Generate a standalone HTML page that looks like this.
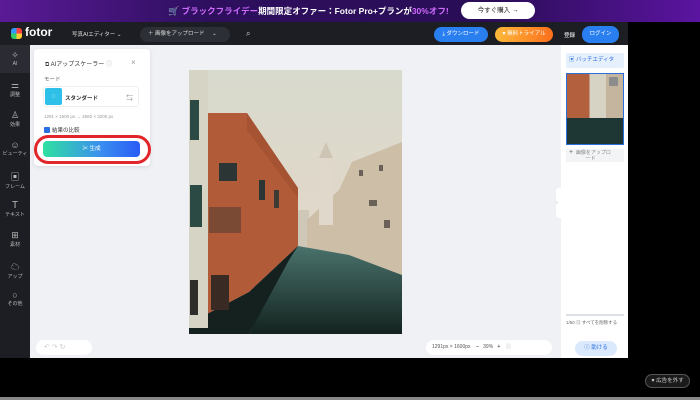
<!DOCTYPE html>
<html><head><meta charset="utf-8"><style>
*{margin:0;padding:0;box-sizing:border-box}
body{width:700px;height:400px;background:#000;position:relative;overflow:hidden;font-family:"Liberation Sans","Noto Sans CJK JP",sans-serif;font-size:6px;color:#333}
.a{position:absolute}
.banner{left:0;top:0;width:700px;height:22px;background:linear-gradient(90deg,#5a1a96,#2d0f5e 30%,#2a0d56 70%,#5b14a0)}
.hdr{left:0;top:22px;width:628px;height:23px;background:#1d1e23}
.side{left:0;top:45px;width:30px;height:313px;background:#1d1e23}
.canvas{left:30px;top:45px;width:531px;height:313px;background:#eff1f4}
.rp{left:561px;top:45px;width:67px;height:313px;background:#fff}
.si{width:30px;text-align:center;color:#bbb;font-size:5px}
.btn{border-radius:8px;color:#fff;font-size:5.5px;text-align:center;line-height:15px;height:15px}
</style></head><body>
<div class="a banner"></div>
<div class="a" style="left:168px;top:5px;font-size:8.5px;color:#fff;white-space:nowrap;font-weight:bold"><span style="font-size:9px">🛒</span> <span style="color:#d06bff">ブラックフライデー</span>期間限定オファー：Fotor Pro+プランが<span style="color:#d06bff">30%オフ!</span></div>
<div class="a" style="left:461px;top:2px;width:74px;height:17px;border-radius:9px;background:#fff;color:#222;font-size:6.5px;text-align:center;line-height:17px">今すぐ購入 →</div>
<div class="a hdr"></div>
<div class="a" style="left:11px;top:28px;width:11px;height:11px;border-radius:3px;background:conic-gradient(#f44 0 25%,#fc3 0 50%,#3c6 0 75%,#39f 0)"></div>
<div class="a" style="left:25px;top:25px;color:#fff;font-size:12px;font-weight:bold">fotor</div>
<div class="a" style="left:72px;top:30px;color:#ddd;font-size:5.5px">写真AIエディター ⌄</div>
<div class="a" style="left:140px;top:27px;width:90px;height:15px;border-radius:8px;background:#2d2f36;color:#ddd;font-size:5.5px;line-height:15px;padding-left:8px">＋ 画像をアップロード &nbsp;&nbsp;&nbsp; ⌄</div>
<div class="a" style="left:246px;top:29px;color:#ccc;font-size:8px">⌕</div>
<div class="a btn" style="left:434px;top:27px;width:54px;background:#2a7ff0">⤓ ダウンロード</div>
<div class="a btn" style="left:495px;top:27px;width:58px;background:linear-gradient(90deg,#fcb93a,#fb6f1c)">♥ 無料トライアル</div>
<div class="a" style="left:564px;top:31px;color:#fff;font-size:5.5px">登録</div>
<div class="a btn" style="left:582px;top:26px;width:37px;height:17px;line-height:17px;background:#2a7ff0">ログイン</div>
<div class="a side"></div>
<div class="a" style="left:0;top:45px;width:30px;height:28px;background:#2b2c33"></div>
<div class="a si" style="left:0;top:50px"><div style="font-size:9px">✧</div>AI</div>
<div class="a si" style="left:0;top:80px"><div style="font-size:9px">⚌</div>調整</div>
<div class="a si" style="left:0;top:110px"><div style="font-size:9px">♙</div>効果</div>
<div class="a si" style="left:0;top:140px"><div style="font-size:9px">☺</div>ビューティ</div>
<div class="a si" style="left:0;top:170px"><div style="font-size:9px">▣</div>フレーム</div>
<div class="a si" style="left:0;top:200px"><div style="font-size:10px">T</div>テキスト</div>
<div class="a si" style="left:0;top:230px"><div style="font-size:9px">⊞</div>素材</div>
<div class="a si" style="left:0;top:260px"><div style="font-size:9px">☁</div>アップ</div>
<div class="a si" style="left:0;top:290px"><div style="font-size:9px">○</div>その他</div>
<div class="a canvas"></div>
<div class="a rp"></div>
<!-- AI panel -->
<div class="a" style="left:34px;top:49px;width:116px;height:117px;background:#fff;border-radius:4px;box-shadow:0 1px 4px rgba(0,0,0,.1)"></div>
<div class="a" style="left:45px;top:59px;font-size:6px;color:#333">⧉ AIアップスケーラー <span style="color:#aaa">ⓘ</span></div>
<div class="a" style="left:131px;top:58px;font-size:8px;color:#999">×</div>
<div class="a" style="left:44px;top:75px;font-size:5.5px;color:#666">モード</div>
<div class="a" style="left:43px;top:86px;width:96px;height:21px;border:1px solid #eee;border-radius:3px"></div>
<div class="a" style="left:45px;top:88px;width:17px;height:17px;background:#2ec0e8;border-radius:2px;color:#fff;text-align:center;line-height:17px;font-size:7px">◌</div>
<div class="a" style="left:65px;top:94px;font-size:5.5px;font-weight:bold;color:#333">スタンダード</div>
<div class="a" style="left:126px;top:93px;font-size:7px;color:#999">⇆</div>
<div class="a" style="left:44px;top:114px;font-size:4.5px;color:#999">1291 × 1600 px → 2582 × 3200 px</div>
<div class="a" style="left:44px;top:127px;width:6px;height:6px;background:#2a6fe0;border-radius:1px"></div>
<div class="a" style="left:52px;top:126px;font-size:5.5px;color:#333">結果の比較</div>
<div class="a" style="left:43px;top:141px;width:97px;height:16px;border-radius:4px;background:linear-gradient(90deg,#2fe0a0,#3a8ef0 60%,#2a5cf5);color:#fff;font-size:5.5px;text-align:center;line-height:16px">✂ 生成</div>
<div class="a" style="left:34px;top:135px;width:117px;height:29px;border:3px solid #e0262a;border-radius:15px"></div>
<!-- photo -->
<svg class="a" style="left:189px;top:70px" width="213" height="264" viewBox="0 0 213 264">
<defs><linearGradient id="s" x1="0" y1="0" x2="0" y2="1"><stop offset="0" stop-color="#d8dacd"/><stop offset="1" stop-color="#e8d6c7"/></linearGradient>
<linearGradient id="w" x1="0" y1="0" x2="0" y2="1"><stop offset="0" stop-color="#4a726c"/><stop offset="1" stop-color="#13231f"/></linearGradient></defs>
<rect width="213" height="264" fill="url(#s)"/>
<rect x="105" y="140" width="15" height="40" fill="#cfc7b8"/>
<polygon points="118,150 150,120 163,92 213,72 213,210 118,180" fill="#cdbea7"/>
<rect x="170" y="100" width="4" height="6" fill="#6a6258"/><rect x="190" y="95" width="4" height="6" fill="#6a6258"/>
<rect x="180" y="130" width="8" height="6" fill="#6a6258"/><rect x="195" y="150" width="6" height="8" fill="#6a6258"/>
<rect x="130" y="85" width="14" height="70" fill="#e0d8cb"/>
<polygon points="130,88 137,72 144,88" fill="#cfc5b5"/>
<polygon points="60,264 100,185 109,176 160,185 213,205 213,264" fill="url(#w)"/>
<polygon points="18,43 58,43 109,118 109,176 60,222 18,244" fill="#b25b39"/>
<polygon points="58,43 109,118 109,128 58,60" fill="#9e4e30" opacity=".6"/>
<rect x="30" y="93" width="18" height="18" fill="#2b3634"/>
<rect x="20" y="137" width="32" height="26" fill="#7a4a34"/>
<rect x="70" y="110" width="6" height="20" fill="#2b3634"/><rect x="85" y="120" width="5" height="18" fill="#3b3a34"/>
<polygon points="0,255 18,244 60,222 109,176 100,190 60,264 0,264" fill="#15211f"/>
<rect x="22" y="205" width="18" height="35" fill="#3a2a24"/>
<rect x="0" y="0" width="19" height="258" fill="#d6d4c4"/>
<rect x="1" y="30" width="9" height="40" fill="#2c4a44"/>
<rect x="1" y="115" width="12" height="42" fill="#2c4a44"/>
<rect x="1" y="210" width="8" height="35" fill="#2e2e2a"/>
</svg>
<!-- right panel -->
<div class="a" style="left:566px;top:53px;width:58px;height:15px;background:#e6effc;border-radius:2px;color:#2a6fe0;font-size:5.5px;line-height:15px;padding-left:3px">▣ バッチエディタ</div>
<div class="a" style="left:566px;top:73px;width:58px;height:72px;border:1px solid #2a6fe0;background:linear-gradient(90deg,#b3603f 0 40%,#d6d2c4 40% 70%,#c6b59e 70%)"></div>
<div class="a" style="left:567px;top:118px;width:56px;height:26px;background:#1e3634"></div>
<div class="a" style="left:609px;top:77px;width:9px;height:9px;background:#8c8c8c;border-radius:1px"></div>
<div class="a" style="left:566px;top:149px;width:58px;height:13px;background:#f3f4f6;color:#888;font-size:5px;line-height:6px;padding:1px 0 0 3px"><span style="font-size:7px;color:#666">+</span> &nbsp;画像をアップロ<br>&nbsp;&nbsp;&nbsp;&nbsp;&nbsp;&nbsp;&nbsp;&nbsp;&nbsp;&nbsp;&nbsp;&nbsp;ード</div>
<div class="a" style="left:556px;top:188px;width:6px;height:30px;background:#fff;border-radius:3px 0 0 3px;color:#999;font-size:5px;line-height:30px">›</div>
<div class="a" style="left:566px;top:314px;width:58px;height:2px;background:#dde0e4"></div>
<div class="a" style="left:566px;top:320px;font-size:4.5px;color:#666">1/50 ▥ すべてを削除する</div>
<div class="a" style="left:575px;top:341px;width:42px;height:15px;background:#dbe9fd;border-radius:8px;color:#2a6fe0;font-size:5.5px;text-align:center;line-height:15px">ⓘ 助ける</div>
<!-- bottom bars -->
<div class="a" style="left:36px;top:340px;width:56px;height:15px;background:#fff;border-radius:8px;color:#ccc;font-size:7px;line-height:15px;padding-left:8px">↶ ↷ ↻</div>
<div class="a" style="left:426px;top:340px;width:126px;height:15px;background:#fff;border-radius:8px;color:#555;font-size:5px;line-height:15px;padding-left:6px;white-space:nowrap">1291px × 1600px &nbsp;&nbsp; <b>−</b> &nbsp; 39% &nbsp; <b>+</b> &nbsp;&nbsp; <span style="color:#bbb">▥</span></div>
<div class="a" style="left:645px;top:374px;width:45px;height:14px;border:1px solid #555;border-radius:7px;background:#1a1a1a;color:#ccc;font-size:5.5px;text-align:center;line-height:12px">♥ 広告を外す</div>
<div class="a" style="left:0;top:397px;width:700px;height:3px;background:#888"></div>
</body></html>
